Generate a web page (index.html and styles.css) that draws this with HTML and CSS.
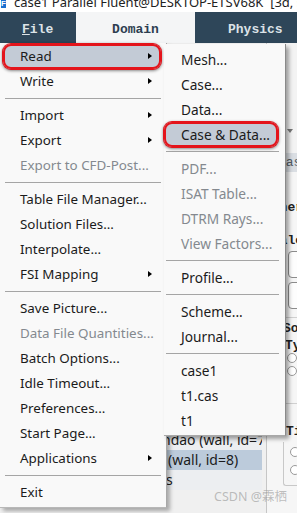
FILE: index.html
```html
<!DOCTYPE html>
<html lang="en">
<head>
    <meta charset="UTF-8">
    <title>Fluent File Menu</title>
    <link rel="stylesheet" href="styles.css">
</head>

<body>
<div class="titlebar">
    <span class="app-icon">F</span>
    <span class="title">case1 Parallel Fluent@DESKTOP-ETSV68K  [3d, sd, pbns, lam]</span>
</div>

<div class="ribbon">
    <div class="tab tab-file"><u>F</u>ile</div>
    <div class="tab tab-active">Domain</div>
    <div class="tab tab-physics">Physics</div>
</div>

<div class="workspace">
    <div class="tree">
        <ul class="zones">
            <li class="zone">ndao (wall, id=7)</li>
            <li class="zone zone-sel">(wall, id=8)</li>
            <li class="zone">s</li>
        </ul>
    </div>
    <div class="panel">
        <div class="rib"><span class="drop"></span></div>
        <div class="bar">Task Page</div>
        <div class="heading">General</div>
        <div class="label">Scale:</div>
        <div class="btnbox"></div>
        <div class="btnbox"></div>
        <div class="rule"></div>
        <div class="caption">Solver</div>
        <div class="type">Type</div>
        <div class="radio"></div>
        <div class="radio"></div>
        <div class="rule rule-low"></div>
        <div class="type type-time">Time</div>
        <div class="group">
            <div class="radio"></div>
            <div class="radio"></div>
        </div>
    </div>
</div>

<!-- File 菜单 -->
<div class="menu menu-file">
    <div class="item sub hl">Read</div>
    <div class="item sub">Write</div>
    <div class="sep"></div>
    <div class="item sub">Import</div>
    <div class="item sub">Export</div>
    <div class="item off">Export to CFD-Post...</div>
    <div class="sep"></div>
    <div class="item">Table File Manager...</div>
    <div class="item">Solution Files...</div>
    <div class="item">Interpolate...</div>
    <div class="item sub">FSI Mapping</div>
    <div class="sep"></div>
    <div class="item">Save Picture...</div>
    <div class="item off">Data File Quantities...</div>
    <div class="item">Batch Options...</div>
    <div class="item">Idle Timeout...</div>
    <div class="item">Preferences...</div>
    <div class="item">Start Page...</div>
    <div class="item sub">Applications</div>
    <div class="sep"></div>
    <div class="item">Exit</div>
</div>

<!-- Read 子菜单 -->
<div class="menu menu-read">
    <div class="item">Mesh...</div>
    <div class="item">Case...</div>
    <div class="item">Data...</div>
    <div class="item hl">Case &amp; Data...</div>
    <div class="sep"></div>
    <div class="item off">PDF...</div>
    <div class="item off">ISAT Table...</div>
    <div class="item off">DTRM Rays...</div>
    <div class="item off">View Factors...</div>
    <div class="sep"></div>
    <div class="item">Profile...</div>
    <div class="sep"></div>
    <div class="item">Scheme...</div>
    <div class="item">Journal...</div>
    <div class="sep"></div>
    <div class="item">case1</div>
    <div class="item">t1.cas</div>
    <div class="item">t1</div>
</div>

<div class="watermark">CSDN @霖栖</div>
</body>
</html>
```

FILE: styles.css
```css
* {
    margin: 0;
    padding: 0;
    box-sizing: border-box;
}

body {
    position: relative;
    width: 297px;
    height: 513px;
    overflow: hidden;
    background-color: #f0f0f0;
    font-family: "Noto Sans", "Noto Sans CJK SC", sans-serif;
    color: #1b1b1b;
}

/* 标题栏 */
.titlebar {
    display: flex;
    height: 12px;
    overflow: hidden;
    background-color: #fff;
}

.app-icon {
    width: 8px;
    height: 8px;
    margin-left: 1px;
    background-color: #1a6fd0;
    color: #fff;
    font: bold 8px/8px "Liberation Sans", sans-serif;
    text-align: center;
}

.title {
    margin: -4px 0 0 8px;
    font-size: 13px;
    line-height: 13px;
    white-space: pre;
    color: #222;
}

/* ribbon 选项卡 */
.ribbon {
    display: flex;
    height: 31px;
    background-color: #2e4659;
}

.tab {
    display: flex;
    align-items: center;
    padding-top: 3px;
    font: bold 13px "Liberation Mono", monospace;
    color: #dce2e7;
}

.tab-file {
    width: 76px;
    padding-left: 22px;
}

.tab-active {
    width: 119px;
    justify-content: center;
    background-color: #f4f5f6;
    color: #2d3e50;
}

.tab-physics {
    flex: 1;
    padding-left: 33px;
}

/* 背景工作区 */
.workspace {
    display: flex;
    height: 470px;
}

.tree {
    display: flex;
    flex-direction: column;
    width: 266px;
}

.zones {
    list-style: none;
    width: 262px;
    margin-top: auto;
    margin-bottom: 23px;
    background-color: #eceef1;
}

.zone {
    height: 20px;
    padding-left: 162px;
    font-size: 14px;
    line-height: 20px;
    white-space: nowrap;
    overflow: hidden;
}

.zone-sel {
    padding-left: 168px;
    background-color: #bccbdb;
}

.zone:last-child {
    padding-left: 166px;
}

.panel {
    width: 31px;
    border-left: 1px solid #c6c6c6;
    background-color: #f6f6f6;
    overflow: hidden;
    font: 13px/15px "Liberation Mono", monospace;
    color: #222;
    white-space: nowrap;
}

.rib {
    height: 110px;
    padding: 86px 0 0 20px;
    background-color: #f3f3f3;
}

.drop {
    display: block;
    width: 0;
    height: 0;
    border-top: 4px solid #777;
    border-left: 3px solid transparent;
    border-right: 3px solid transparent;
}

.bar {
    height: 19px;
    padding-left: 11px;
    line-height: 19px;
    background-color: #dadee3;
    color: #505a64;
}

.heading {
    margin: 28px 0 0 -3px;
    font-weight: bold;
}

.label {
    margin: 18px 0 0 -3px;
    font-weight: bold;
}

.btnbox {
    width: 30px;
    height: 27px;
    margin: 3px 0 0 21px;
    border: 1px solid #8c8c8c;
    border-radius: 4px;
    background-color: #fdfdfd;
}

.btnbox + .btnbox {
    margin-top: 4px;
}

.rule {
    height: 1px;
    margin-top: 8px;
    background-color: #d0d0d0;
}

.rule-low {
    margin-top: 27px;
}

.caption {
    margin: 3px 0 0 16px;
    font-weight: bold;
}

.type {
    margin: 2px 0 0 18px;
    font-weight: bold;
}

.type-time {
    margin: 20px 0 0 19px;
}

.radio {
    width: 10px;
    height: 10px;
    margin-left: 20px;
    border: 1px solid #999;
    border-radius: 50%;
    background-color: #fff;
}

.radio + .radio {
    margin-top: 3px;
}

.group {
    height: 44px;
    margin: 3px 0 0 16px;
    padding-top: 5px;
    border-left: 1px solid #c8c8c8;
    border-bottom: 1px solid #c8c8c8;
    border-bottom-left-radius: 3px;
}

.group .radio {
    margin-left: 6px;
}

.group .radio + .radio {
    margin-top: 8px;
}

/* 菜单 */
.menu {
    position: absolute;
    padding: 2px 0;
    background-color: #f9f9f9;
    font-size: 13.4px;
}

.menu-file {
    left: 0;
    top: 43px;
    width: 167px;
    padding-top: 1px;
    border-right: 1px solid #a8a8a8;
    border-bottom: 1px solid #b8b8b8;
    box-shadow: 3px 3px 4px rgba(0, 0, 0, .3);
}

.menu-read {
    left: 164px;
    top: 44px;
    width: 122px;
    padding-top: 3px;
    border-right: 1px solid #8a8a8a;
    border-bottom: 1px solid #a8a8a8;
    box-shadow: 3px 3px 4px rgba(0, 0, 0, .35);
}

.item {
    position: relative;
    height: 25px;
    padding-left: 20px;
    line-height: 25px;
    white-space: nowrap;
}

.menu-read .item {
    padding-left: 17px;
    font-size: 13.7px;
}

.off {
    color: #84898f;
}

.sub::after {
    content: "";
    position: absolute;
    right: 14px;
    top: 9px;
    border-left: 4px solid #000;
    border-top: 3.5px solid transparent;
    border-bottom: 3.5px solid transparent;
}

.sep {
    height: 1px;
    margin: 4px 5px 4px 5px;
    background-color: #a5a5a5;
}

.menu-read .sep {
    margin: 4px 6px 4px 2px;
}

.menu .hl {
    margin: 0 5px 0 3px;
    padding-left: 17px;
    border-radius: 8px;
    background-color: #c3cbd6;
    box-shadow: inset 0 0 0 2px #e4141b, 0 0 0 1px #e4141b, 0 1px 3px 1px rgba(0, 0, 0, .45);
}

.menu-file .hl::after {
    right: 9px;
}

.menu-read .hl {
    margin: 0 7px 0 0;
    padding-left: 17px;
}

.watermark {
    position: absolute;
    left: 214px;
    top: 486px;
    font: 12.5px "Noto Sans", "Noto Sans CJK SC", sans-serif;
    color: rgba(150, 150, 150, .6);
}
```
